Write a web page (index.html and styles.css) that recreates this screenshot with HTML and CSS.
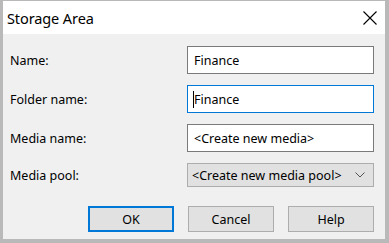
FILE: index.html
```html
<!DOCTYPE html>
<html>
<head>
<meta charset="utf-8">
<link rel="stylesheet" href="styles.css">
</head>
<body>
<div class="window">
  <div class="titlebar">
    <span class="title">Storage Area</span>
    <svg class="close" width="14" height="14" viewBox="0 0 14 14"><path d="M0.5 0.5 L13.5 13.5 M13.5 0.5 L0.5 13.5" stroke="#000" stroke-width="1.1" fill="none"/></svg>
  </div>
  <div class="content">
    <div class="form">
      <div class="row r1">
        <span class="label">Name:</span>
        <div class="field">Finance</div>
      </div>
      <div class="row r2">
        <span class="label">Folder name:</span>
        <div class="field focused"><span class="caret"></span>Finance</div>
      </div>
      <div class="row r3">
        <span class="label">Media name:</span>
        <div class="field">&lt;Create new media&gt;</div>
      </div>
      <div class="row r4">
        <span class="label">Media pool:</span>
        <div class="combo"><span>&lt;Create new media pool&gt;</span>
          <svg width="10" height="6" viewBox="0 0 10 6"><path d="M0.5 0.5 L5 5 L9.5 0.5" stroke="#555" stroke-width="1" fill="none"/></svg>
        </div>
      </div>
    </div>
    <div class="buttons">
      <div class="btn default">OK</div>
      <div class="btn">Cancel</div>
      <div class="btn">Help</div>
    </div>
  </div>
</div>
</body>
</html>
```
FILE: styles.css
```css
html, body {
  margin: 0;
  padding: 0;
  background: #b9b9b9;
}
body {
  width: 389px;
  height: 243px;
  font-family: "Noto Sans", "Open Sans", sans-serif;
  font-size: 12px;
  color: #000;
}
.window {
  box-sizing: border-box;
  width: 389px;
  height: 243px;
  border-style: solid;
  border-color: #b9b9b9;
  border-width: 1px 4px 4px 3px;
  display: flex;
  flex-direction: column;
}
.titlebar {
  height: 33px;
  background: #fff;
  display: flex;
  align-items: center;
  justify-content: space-between;
  padding: 0 7px 0 4px;
  flex-shrink: 0;
}
.title {
  font-size: 14.5px;
  letter-spacing: -0.1px;
}
.close {
  margin-right: 1px;
  margin-top: 1px;
}
.content {
  flex: 1;
  background: #f0f0f0;
  display: flex;
  flex-direction: column;
  padding: 12px 11px 0 7px;
}
.form {
  display: flex;
  flex-direction: column;
  gap: 11px;
}
.row {
  display: flex;
  align-items: center;
  justify-content: space-between;
}
.label {
  font-size: 12.5px;
}
.field {
  box-sizing: border-box;
  width: 187px;
  height: 28px;
  background: #fff;
  border: 1px solid #7a7a7a;
  padding: 0 6px;
  display: flex;
  align-items: center;
  font-size: 12.5px;
  position: relative;
}
.field.focused {
  border-color: #0078d7;
}
.caret {
  position: absolute;
  left: 5px;
  top: 5px;
  width: 1px;
  height: 17px;
  background: #000;
}
.combo {
  box-sizing: border-box;
  width: 187px;
  height: 24px;
  background: #e1e1e1;
  border: 1px solid #adadad;
  padding: 0 8px 0 4px;
  display: flex;
  align-items: center;
  justify-content: space-between;
  font-size: 12.5px;
}
.buttons {
  display: flex;
  justify-content: flex-end;
  gap: 14px;
  margin-top: 19px;
}
.btn {
  box-sizing: border-box;
  width: 86px;
  height: 26px;
  background: #e1e1e1;
  border: 1px solid #adadad;
  display: flex;
  align-items: center;
  justify-content: center;
  font-size: 12.5px;
}
.btn.default {
  border: 2px solid #0078d7;
}
```
